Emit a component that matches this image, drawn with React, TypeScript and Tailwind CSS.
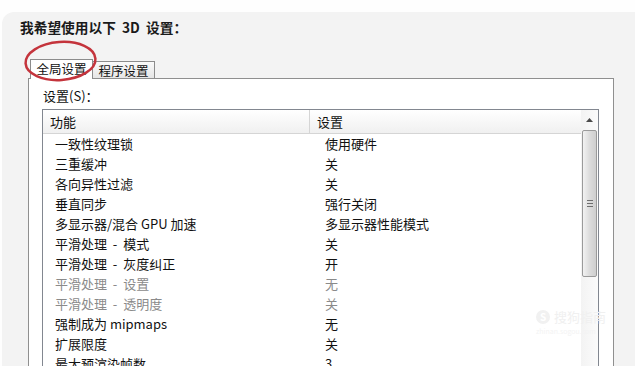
import React from "react";

type Row = { name: string; value: string; disabled?: boolean };

const rows: Row[] = [
  { name: "一致性纹理锁", value: "使用硬件" },
  { name: "三重缓冲", value: "关" },
  { name: "各向异性过滤", value: "关" },
  { name: "垂直同步", value: "强行关闭" },
  { name: "多显示器/混合 GPU 加速", value: "多显示器性能模式" },
  { name: "平滑处理  -  模式", value: "关" },
  { name: "平滑处理  -  灰度纠正", value: "开" },
  { name: "平滑处理  -  设置", value: "无", disabled: true },
  { name: "平滑处理  -  透明度", value: "关", disabled: true },
  { name: "强制成为 mipmaps", value: "无" },
  { name: "扩展限度", value: "关" },
  { name: "最大预渲染帧数", value: "3" },
];

const font = { fontFamily: "'Noto Sans CJK SC', 'Noto Sans', sans-serif" };

function Scrollbar() {
  return (
    <div className="flex w-[17px] flex-col bg-gradient-to-r from-[#f3f3f3] to-[#fbfbfb]">
      {/* up arrow */}
      <div className="flex h-[20px] items-center justify-center">
        <svg width="7" height="4" viewBox="0 0 7 4" aria-hidden="true">
          <path d="M3.5 0L7 4H0Z" fill="#4a4a4a" />
        </svg>
      </div>
      {/* thumb */}
      <div className="mx-[1px] flex h-[147px] items-center justify-center rounded-[2px] border border-[#9a9a9a] bg-gradient-to-r from-[#f2f2f2] via-[#dcdcdc] to-[#cfcfcf]">
        <div className="flex flex-col gap-[2px]">
          <div className="h-px w-[6px] bg-[#6e6e6e]" />
          <div className="h-px w-[6px] bg-[#6e6e6e]" />
          <div className="h-px w-[6px] bg-[#6e6e6e]" />
        </div>
      </div>
    </div>
  );
}

export default function App() {
  return (
    <div
      className="relative h-[366px] w-[635px] overflow-hidden bg-[#fefefe] pt-[12px] text-[#111]"
      style={font}
    >
      <div className="ml-[2px] h-full rounded-tl-[12px] bg-[#f3f3f3] pt-[7px]">
        <h1 className="ml-[18px] whitespace-pre text-[13.7px] font-bold leading-[16px] text-[#1a1a1a]">
          我希望使用以下  3D  设置：
        </h1>

        {/* tabs */}
        <div className="ml-[28px] mt-[24px] flex items-end">
          <div className="relative z-10 -mb-px flex h-[20px] w-[63px] items-center justify-center border border-b-0 border-[#8c8c8c] bg-white text-[12.5px] leading-none">
            全局设置
          </div>
          <div className="flex h-[17px] w-[62px] items-center justify-center border border-b-0 border-l-0 border-[#8c8c8c] bg-gradient-to-b from-[#fafafa] to-[#e6e6e6] pt-[2px] text-[12.5px] leading-none">
            程序设置
          </div>
        </div>

        {/* tab pane */}
        <div className="ml-[26px] h-[300px] w-[586px] border border-[#8f8f8f] bg-white pt-[9px]">
          <div className="ml-[14px] text-[13px] leading-[16px]">设置(S)：</div>

          <div className="ml-[13px] mt-[5px] flex h-[270px] w-[557px] border border-[#828790] bg-white">
            <div className="flex-1">
              {/* header */}
              <div className="grid h-[24px] grid-cols-[267px_1fr] border-b border-[#d5d5d5] bg-gradient-to-b from-white to-[#f0f0f0] text-[13px] leading-[23px]">
                <div className="border-r border-[#d5d5d5] pl-[7px]">功能</div>
                <div className="pl-[7px]">设置</div>
              </div>
              {rows.map((r) => (
                <div
                  key={r.name}
                  className={
                    "grid h-[20px] grid-cols-[268px_1fr] text-[13px] leading-[20px] " +
                    (r.disabled ? "text-[#8a8a8a]" : "text-[#111]")
                  }
                >
                  <div className="whitespace-pre pl-[12px]">{r.name}</div>
                  <div className="pl-[14px]">{r.value}</div>
                </div>
              ))}
            </div>
            <Scrollbar />
          </div>
        </div>
      </div>

      {/* watermark */}
      <div className="absolute left-[536px] top-[309px] flex flex-col items-start">
        <div className="flex items-center gap-[4px]">
          <div className="flex h-[14px] w-[14px] items-center justify-center rounded-full bg-[#f1f1f1] text-[10px] font-bold leading-none text-white">
            S
          </div>
          <span className="text-[13px] leading-[16px] text-[#f0f0f0]">搜狗指南</span>
        </div>
        <span className="mt-[2px] text-[7px] leading-[8px] text-[#f3f3f3]">zhinan.sogou.com</span>
      </div>

      {/* red annotation ellipse */}
      <svg
        className="absolute left-[22px] top-[39px] z-20"
        width="77"
        height="44"
        viewBox="0 0 77 44"
        aria-hidden="true"
      >
        <ellipse
          cx="38.5"
          cy="22"
          rx="35"
          ry="19"
          fill="none"
          stroke="#c4343c"
          strokeWidth="2.5"
          transform="rotate(-4 38.5 22)"
        />
      </svg>
    </div>
  );
}
